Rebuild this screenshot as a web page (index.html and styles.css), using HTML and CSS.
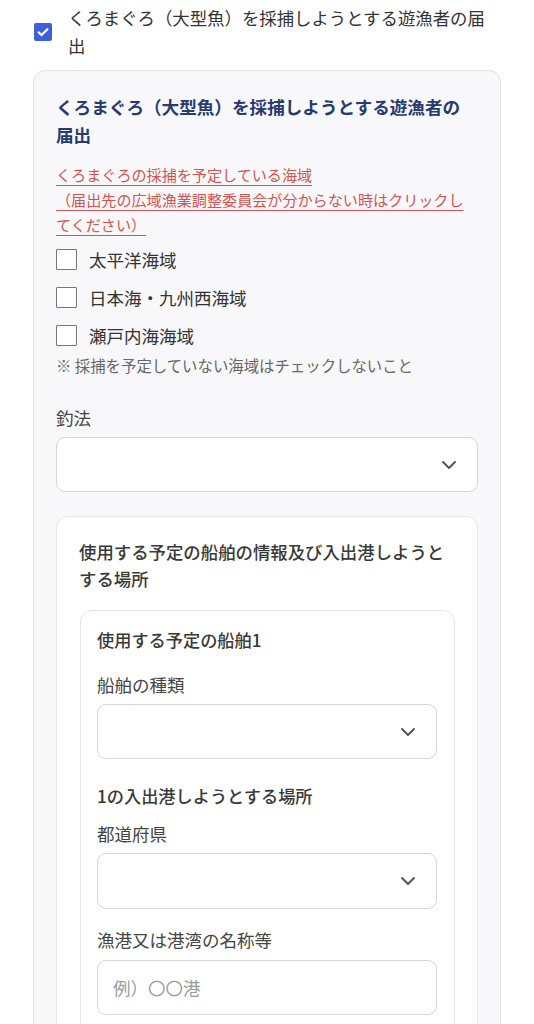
FILE: index.html
```html
<!DOCTYPE html>
<html lang="ja">
<head>
<meta charset="utf-8">
<link rel="stylesheet" href="styles.css">
</head>
<body>
<div class="top-check">
  <span class="cb cb-on">
    <svg viewBox="0 0 18 18" width="18" height="18"><path d="M4.6 9.3 L7.6 12.1 L13.4 6.2" fill="none" stroke="#fff" stroke-width="2.2" stroke-linecap="round" stroke-linejoin="round"/></svg>
  </span>
  <span class="top-text">くろまぐろ（大型魚）を採捕しようとする遊漁者の届出</span>
</div>

<section class="card">
  <h2 class="card-title">くろまぐろ（大型魚）を採捕しようとする遊漁者の届出</h2>
  <p class="sea-link"><a href="#">くろまぐろの採捕を予定している海域<br>（届出先の広域漁業調整委員会が分からない時はクリックしてください）</a></p>
  <div class="options">
    <label class="opt"><span class="box"></span><span>太平洋海域</span></label>
    <label class="opt"><span class="box"></span><span>日本海・九州西海域</span></label>
    <label class="opt"><span class="box"></span><span>瀬戸内海海域</span></label>
  </div>
  <p class="note">※ 採捕を予定していない海域はチェックしないこと</p>

  <div class="field field-first">
    <div class="label">釣法</div>
    <div class="select"><svg class="chev" viewBox="0 0 16 10" width="16" height="10"><path d="M2 2 L8 8 L14 2" fill="none" stroke="#555" stroke-width="2" stroke-linecap="round" stroke-linejoin="round"/></svg></div>
  </div>

  <div class="sub-card">
    <h3 class="sub-title">使用する予定の船舶の情報及び入出港しようとする場所</h3>
    <div class="ship-card">
      <h4 class="ship-title">使用する予定の船舶1</h4>
      <div class="field f-type">
        <div class="label">船舶の種類</div>
        <div class="select"><svg class="chev" viewBox="0 0 16 10" width="16" height="10"><path d="M2 2 L8 8 L14 2" fill="none" stroke="#555" stroke-width="2" stroke-linecap="round" stroke-linejoin="round"/></svg></div>
      </div>
      <h4 class="ship-title port-title">1の入出港しようとする場所</h4>
      <div class="field f-pref">
        <div class="label">都道府県</div>
        <div class="select"><svg class="chev" viewBox="0 0 16 10" width="16" height="10"><path d="M2 2 L8 8 L14 2" fill="none" stroke="#555" stroke-width="2" stroke-linecap="round" stroke-linejoin="round"/></svg></div>
      </div>
      <div class="field f-port">
        <div class="label">漁港又は港湾の名称等</div>
        <div class="input"><span class="ph">例）〇〇港</span></div>
      </div>
    </div>
  </div>
</section>
</body>
</html>
```
FILE: styles.css
```css
* { box-sizing: border-box; }
html, body { margin: 0; padding: 0; background: #fff; }
body {
  font-family: "Noto Sans CJK JP", "Noto Sans", sans-serif;
  color: #333;
  font-size: 17.5px;
  padding-top: 4px;
  overflow: hidden;
  height: 1024px;
}
.top-check {
  display: flex;
  align-items: center;
  padding-left: 34px;
  gap: 16px;
}
.cb {
  width: 18px; height: 18px; flex: 0 0 18px;
  border-radius: 2px;
  display: flex; align-items: center; justify-content: center;
}
.cb-on { background: #3d5fd9; }
.top-text {
  width: 430px;
  font-size: 17.4px;
  line-height: 28px;
  color: #333;
}
.card {
  margin: 10px 33px 0;
  background: #f8f8fa;
  border: 1px solid #e1e2e7;
  border-radius: 12px;
  padding: 22px 22px 0;
  height: 980px;
}
.card-title {
  margin: 0;
  max-width: 412px;
  font-size: 17.6px;
  font-weight: 700;
  line-height: 28px;
  color: #283a72;
}
.sea-link {
  margin: 13px 0 0;
  max-width: 412px;
  font-size: 15.1px;
  line-height: 25px;
}
.sea-link a {
  color: #d4534f;
  text-decoration: underline;
  text-decoration-thickness: 1px;
  text-underline-offset: 4px;
}
.options { display: flex; flex-direction: column; margin-top: 3px; }
.opt {
  display: flex;
  align-items: center;
  gap: 12px;
  height: 38px;
  font-size: 17.5px;
  color: #333;
}
.box {
  width: 21px; height: 21px;
  border: 1.5px solid #777;
  background: #fff;
  border-radius: 1px;
}
.note {
  margin: 0;
  font-size: 15.4px;
  line-height: 22px;
  color: #666;
}
.field { display: flex; flex-direction: column; }
.label {
  font-size: 17.5px;
  line-height: 28px;
  color: #444;
}
.field-first { margin-top: 28px; }
.field-first .label { margin-bottom: 5px; }
.select, .input {
  height: 55px;
  background: #fff;
  border: 1px solid #d5d6dc;
  border-radius: 9px;
  display: flex;
  align-items: center;
}
.select { justify-content: flex-end; padding-right: 20px; }
.chev { display: block; }
.sub-card {
  margin-top: 24px;
  background: #fff;
  border: 1px solid #e5e6eb;
  border-radius: 12px;
  padding: 21px 22px 0;
  height: 560px;
}
.sub-title {
  margin: 0;
  font-size: 17.4px;
  font-weight: 500;
  line-height: 27px;
  color: #383838;
}
.ship-card {
  margin-top: 18px;
  margin-left: 1px;
  background: #fff;
  border: 1px solid #e5e6eb;
  border-radius: 12px;
  padding: 15px 17px 0 16px;
  height: 460px;
}
.ship-title {
  margin: 0;
  font-size: 17.2px;
  font-weight: 500;
  line-height: 27px;
  color: #383838;
}
.f-type { margin-top: 18px; }
.f-type .label { margin-bottom: 5px; }
.port-title { margin-top: 23px; }
.f-pref { margin-top: 11px; }
.f-pref .label { margin-bottom: 5px; }
.f-pref .select { height: 56px; }
.f-port { margin-top: 17px; }
.f-port .label { margin-bottom: 6px; }
.input { padding-left: 15px; }
.ph { color: #9a9a9f; font-size: 17.5px; }
```
